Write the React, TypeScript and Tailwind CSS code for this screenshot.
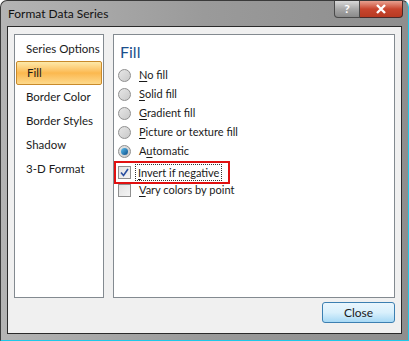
import React from 'react';

const font = { fontFamily: 'Lato, "Liberation Sans", sans-serif' };

const categories = ['Series Options', 'Fill', 'Border Color', 'Border Styles', 'Shadow', '3-D Format'];

const Radio = ({ checked }: { checked?: boolean }) => (
    <span className="w-[13px] h-[13px] rounded-full border border-[#8f8f8f] bg-gradient-to-br from-[#e6e6e6] to-[#c9c9c9] flex items-center justify-center shrink-0">
        {checked && <span className="w-[7px] h-[7px] rounded-full bg-gradient-to-br from-[#5bc0f0] to-[#0b4f8a]" />}
    </span>
);

const Check = ({ checked }: { checked?: boolean }) => (
    <span className="w-[13px] h-[13px] border border-[#8f8f8f] bg-gradient-to-br from-[#e2e2e2] to-[#f4f4f4] flex items-center justify-center shrink-0">
        {checked && (
            <svg width="9" height="9" viewBox="0 0 9 9">
                <path d="M1 4.5 L3.5 7.5 L8 1" fill="none" stroke="#2a4fa0" strokeWidth="1.6" />
            </svg>
        )}
    </span>
);

// underline the access key letter
const Label = ({ text, k }: { text: string; k: number }) => (
    <span className="whitespace-nowrap">
        {text.slice(0, k)}
        <span className="underline underline-offset-2">{text[k]}</span>
        {text.slice(k + 1)}
    </span>
);

const options = [
    { text: 'No fill', k: 0 },
    { text: 'Solid fill', k: 0 },
    { text: 'Gradient fill', k: 0 },
    { text: 'Picture or texture fill', k: 0 },
    { text: 'Automatic', k: 1, checked: true },
];

export default function App() {
    return (
        <div className="w-[409px] h-[341px] bg-white overflow-hidden" style={font}>
            <div className="w-[409px] h-[341px] rounded-t-[7px] border border-[#3a3a3a] border-r-[#1ec8e8] border-b-[#1ec8e8] bg-gradient-to-r from-[#b4b4b4] via-[#9a9a9a] to-[#8e8e8e] flex flex-col">
                {/* title bar */}
                <div className="h-[25px] flex items-start shrink-0">
                    <span className="pl-[7px] pt-[5px] text-[12px] text-[#111] leading-[16px]">Format Data Series</span>
                    <div className="ml-auto mr-[5px] flex">
                        <div className="w-[26px] h-[17px] rounded-bl-[4px] border border-[#4a4a4a] border-t-0 bg-gradient-to-b from-[#d8d8d8] via-[#a8a8a8] to-[#8a8a8a] flex items-center justify-center text-white font-bold text-[12px] leading-none">?</div>
                        <div className="w-[43px] h-[17px] rounded-br-[4px] border border-[#4a2a2a] border-t-0 border-l-0 bg-gradient-to-b from-[#e8a090] via-[#c8452e] to-[#b83a22] flex items-center justify-center">
                            <svg width="12" height="10" viewBox="0 0 12 10">
                                <path d="M2 1 L10 9 M10 1 L2 9" stroke="#fff" strokeWidth="2.4" />
                            </svg>
                        </div>
                    </div>
                </div>

                {/* client area */}
                <div className="mx-[6px] mb-[6px] flex-1 border border-[#2a2a2a] bg-[#f0f0f0] flex flex-col p-[6px] pt-[7px]">
                    <div className="flex flex-1 gap-[9px]">
                        <div className="w-[90px] border border-[#838a90] bg-white pt-[2px] px-[1px]">
                            {categories.map(c => (
                                <div
                                    key={c}
                                    className={`h-[24px] flex items-center pl-[10px] text-[11.5px] text-[#1a1a1a] whitespace-nowrap ${c === 'Fill' ? 'rounded-[2px] border border-[#c98a2a] bg-gradient-to-b from-[#fde9a8] via-[#fbb84e] to-[#fdd98a]' : ''}`}
                                >
                                    {c}
                                </div>
                            ))}
                        </div>
                        <div className="flex-1 border border-[#838a90] bg-white pt-[7px]">
                            <div className="pl-[6px] text-[16px] leading-[20px] text-[#1c4f8c] mb-[4px]">Fill</div>
                            <div className="flex flex-col text-[11px] text-[#1a1a1a]">
                                {options.map(o => (
                                    <div key={o.text} className="h-[19px] flex items-center gap-[8px] pl-[4px]">
                                        <Radio checked={o.checked} />
                                        <Label text={o.text} k={o.k} />
                                    </div>
                                ))}
                                <div className="w-[116px] h-[23px] border-2 border-[#e01010] flex items-center gap-[4px] pl-[2px]">
                                    <Check checked />
                                    <span className="border border-dotted border-[#333] px-[2px] leading-[15px]">
                                        <Label text="Invert if negative" k={0} />
                                    </span>
                                </div>
                                <div className="h-[15px] -mt-[1px] flex items-center gap-[8px] pl-[4px]">
                                    <Check />
                                    <Label text="Vary colors by point" k={0} />
                                </div>
                            </div>
                        </div>
                    </div>
                    <div className="flex justify-end pt-[4px] pb-[4px] pr-[0px]">
                        <button className="w-[73px] h-[21px] rounded-[3px] border border-[#3c7fb1] bg-gradient-to-b from-[#eaf6fd] via-[#d9f0fc] to-[#a7d9f5] text-[12px] text-[#1a1a1a] leading-none">
                            Close
                        </button>
                    </div>
                </div>
            </div>
        </div>
    );
}
